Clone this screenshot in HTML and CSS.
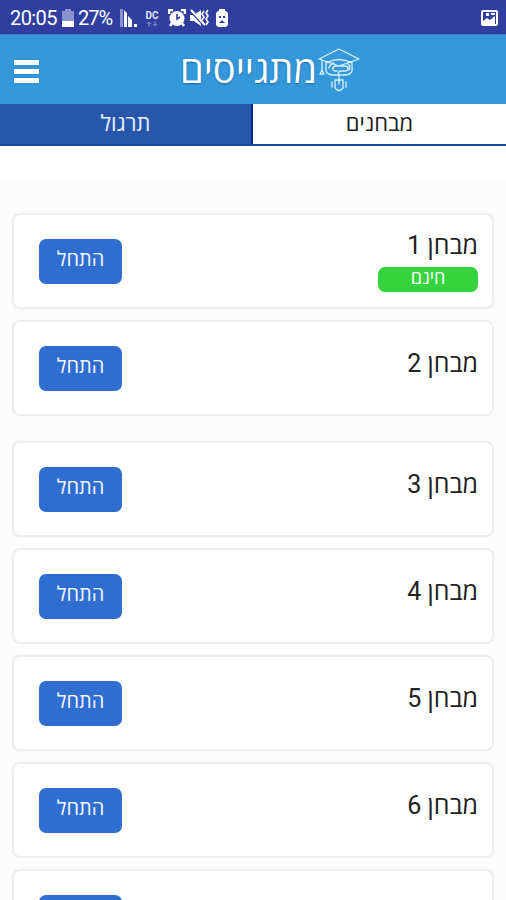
FILE: index.html
```
<!DOCTYPE html>
<html lang="he" dir="rtl">
<head>
<meta charset="utf-8">
<title>מתגייסים</title>
<link rel="stylesheet" href="styles.css">
</head>
<body>
<div class="status" dir="ltr">
  <span class="time">20:05</span>
  <svg class="battery" width="12" height="18" viewBox="0 0 12 18"><path fill="#8792d0" d="M3 0h6v2h3v11H0V2h3z"/><path fill="#fff" d="M0 12h12v6H0z"/></svg>
  <span class="percent">27%</span>
  <svg class="signal" width="18" height="18" viewBox="0 0 18 18"><path fill="#8792d0" d="M0 0h3v18H0z"/><path fill="#fff" d="M4 1l3 3v14H4zM8 7l4 4v7H8zM14 15h3v3h-3z"/></svg>
  <span class="data"><span class="dc">DC</span><svg width="10" height="6" viewBox="0 0 10 6"><path d="M2 6V1M0 3l2-2 2 2M8 0v5M6 3l2 2 2-2" stroke="#8d96d3" fill="none"/></svg></span>
  <svg class="alarm" width="18" height="18" viewBox="0 0 18 18"><circle cx="9" cy="9.500" r="7.500" fill="#fff"/><path d="M1 5V1h4M17 5V1h-4M4 14l-2 3M14 14l2 3" stroke="#fff" stroke-width="2.500" fill="none"/><path d="M9 5v5l3-2" stroke="#303f9f" stroke-width="1.600" fill="none"/></svg>
  <svg class="mute" width="20" height="18" viewBox="0 0 20 18"><path fill="#fff" d="M0 6h4l7-5v16l-7-5H0z"/><path d="M1 2l14 15" stroke="#303f9f" stroke-width="3"/><path d="M1 1l14 15" stroke="#fff" stroke-width="2"/><path d="M14 2l-2 3 2 3-2 3M18 1l-2 3 2 3-2 3 2 3-2 3" stroke="#fff" stroke-width="1.600" fill="none"/></svg>
  <svg class="saver" width="12" height="18" viewBox="0 0 12 18"><path fill="#fff" d="M3 0h6v2h1l2 2v12l-2 2H2l-2-2V4l2-2h1z"/><path fill="#303f9f" d="M3 7h2v2H3zM7 7h2v2H7zM3 14l3-3 3 3z"/></svg>
  <svg class="photo" width="17" height="16" viewBox="0 0 17 16"><rect x="1" y="1" width="15" height="14" rx="1" fill="#303f9f" stroke="#fff" stroke-width="2"/><path fill="#fff" d="M2 14v-3l4-3 3 2 5-4v8zM5 3h3v3H5zM10 3h4v2h-4z"/></svg>
</div>
<header class="appbar" dir="ltr">
  <button class="menu" aria-label="תפריט"><i></i><i></i><i></i></button>
  <div class="brand">
    <span class="name" dir="rtl">מתגייסים</span>
    <svg class="cap" width="42" height="44" viewBox="0 0 42 44" fill="none" stroke="#d9f1ff" stroke-width="1.300" stroke-linejoin="round" stroke-linecap="round"><path d="M1 11L21 1l20 10-20 7zM4 12v10M4 22l-2 4h4zM8 14v7M34 14v7M8 15q13-7 26 0M8 20c-1 5 3 7 7 7h6v5M34 20c1 5-3 7-7 7h-5c-3 0-2-4 1-4h4c4 0 4-5 0-5h-9c-4 0-4 5-1 5h2M11 20q1-4 5-5M30 16q3 2 1 6"/><path d="M17 32h8v8q-4 5-8 0zM21 32v4M14 34v5M28 34v5"/></svg>
  </div>
</header>
<nav class="tabs">
  <a class="tab active">מבחנים</a>
  <a class="tab">תרגול</a>
</nav>
<div class="spacer"></div>
<main class="list">
  <section class="card free"><div class="info"><h2>מבחן 1</h2><span class="badge">חינם</span></div><button class="start">התחל</button></section>
  <section class="card last-open"><div class="info"><h2>מבחן 2</h2></div><button class="start">התחל</button></section>
  <section class="card"><div class="info"><h2>מבחן 3</h2></div><button class="start">התחל</button></section>
  <section class="card"><div class="info"><h2>מבחן 4</h2></div><button class="start">התחל</button></section>
  <section class="card"><div class="info"><h2>מבחן 5</h2></div><button class="start">התחל</button></section>
  <section class="card"><div class="info"><h2>מבחן 6</h2></div><button class="start">התחל</button></section>
  <section class="card"><div class="info"><h2>מבחן 7</h2></div><button class="start">התחל</button></section>
</main>
</body>
</html>
```
FILE: styles.css
```
* { box-sizing: border-box; }
html, body { height: 100%; }
body { margin: 0; overflow: hidden; background: #fcfcfc; color: #222; font-family: Roboto, "Open Sans", "Noto Sans", sans-serif; }
button { border: 0; padding: 0; font: inherit; }
svg { display: block; flex: none; }
.status { height: 34px; background: #303f9f; color: #fff; display: flex; align-items: center; padding: 2px 8px 0 10px; font-size: 20px; line-height: 32px; }
.time { width: 52px; letter-spacing: -.6px; }
.percent { width: 42px; margin-left: 4px; letter-spacing: -1px; }
.data { width: 16px; margin-left: 6px; display: flex; flex-direction: column; align-items: center; color: #dfe3fa; }
.dc { font-size: 10px; line-height: 11px; font-weight: 700; }
.alarm { margin-left: 8px; }
.mute { margin-left: 4px; }
.saver { margin-left: 6px; }
.photo { margin-left: auto; }
.appbar { height: 70px; background: #3498db; display: grid; grid-template-columns: 175px 1fr; align-items: center; border-top: 1px solid #367bd2; }
.menu { width: 26px; height: 23px; margin: 4px 0 0 14px; background: none; display: flex; flex-direction: column; justify-content: space-between; }
.menu i { height: 5px; width: 25px; background: #fff; box-shadow: 0 0 2px #1779bd; }
.brand { display: flex; align-items: center; color: #fff; }
.name { width: 142px; font-size: 38px; line-height: 60px; white-space: nowrap; text-shadow: 0 1px 2px #20679b; }
.cap { margin-left: 1px; }
.tabs { height: 42px; display: grid; grid-template-columns: 1fr 1fr; border-bottom: 2px solid #1748a8; }
.tab { background: #2757aa; color: #e8eefc; display: flex; align-items: center; justify-content: center; font-size: 22px; line-height: 38px; border-right: 2px solid #0c2897; }
.tab.active { background: #fff; color: #222; border: 0; }
.spacer { height: 34px; background: #fff; }
.list { padding: 33px 12px 0; display: flex; flex-direction: column; gap: 11px; }
.card { flex: none; height: 96px; border: 2px solid #eee; border-radius: 8px; background: #fff; display: flex; justify-content: space-between; align-items: center; padding: 0 14px 0 25px; box-shadow: 0 0 2px #f0f0f0; }
.last-open { margin-bottom: 14px; }
.info { width: 100px; display: flex; flex-direction: column; padding-bottom: 9px; }
.free .info { padding-bottom: 0; }
h2 { margin: 0; font-size: 25px; font-weight: 400; line-height: 34px; white-space: nowrap; }
.free h2 { margin-top: -1px; }
.badge { height: 25px; margin-top: 4px; border-radius: 7px; background: #36d43c; color: #fff; text-align: center; font-size: 18px; line-height: 21px; }
.start { width: 83px; height: 45px; border-radius: 7px; background: #2f6dd0; color: #f2f7ff; font-size: 20px; line-height: 40px; padding-bottom: 4px; }
```
